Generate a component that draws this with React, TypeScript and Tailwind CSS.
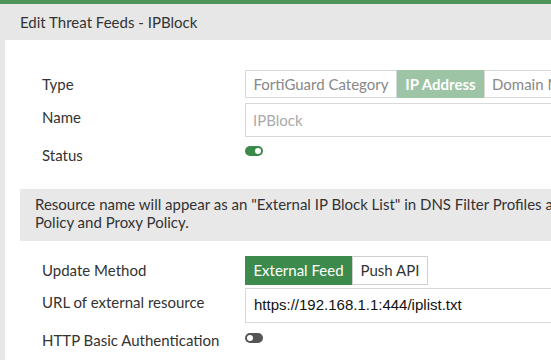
import React from 'react';

const Toggle = ({ on, className }: { on: boolean; className?: string }) => (
  <div
    className={`w-[18px] h-[10px] rounded-full flex items-center px-[2px] ${
      on ? 'bg-[#3b8a4a] justify-end' : 'bg-[#555555] justify-start'
    } ${className ?? ''}`}
  >
    <div className="w-[6px] h-[6px] rounded-full bg-white" />
  </div>
);

const Row = ({ label, children, lp }: { label: string; children: React.ReactNode; lp: string }) => (
  <div className="flex items-start">
    <div className={`w-[203px] shrink-0 text-[15px] leading-[18px] text-[#333333] ${lp}`}>{label}</div>
    <div className="flex-1 min-w-0 flex items-start">{children}</div>
  </div>
);

export default function App() {
  return (
    <div
      className="w-[551px] h-[360px] overflow-hidden bg-[#e7e7e7] flex flex-col"
      style={{ fontFamily: 'Lato, "Noto Sans", sans-serif' }}
    >
      <div className="h-[4px] bg-[#4e935a] shrink-0" />
      <div className="h-[36px] shrink-0 flex items-center pl-[20px] text-[15px] text-[#333333]">
        Edit Threat Feeds - IPBlock
      </div>
      <div className="flex-1 ml-[5px] bg-white pt-[30px] overflow-hidden">
        <div className="pl-[37px] flex flex-col w-[700px]">
          <Row label="Type" lp="pt-[5px]">
            <div className="flex h-[28px] text-[15px]">
              <div className="w-[152px] border border-[#d8d8d8] flex items-center justify-center text-[#888888]">
                FortiGuard Category
              </div>
              <div className="w-[87px] bg-[#9dc4a4] text-white font-bold flex items-center justify-center">
                IP Address
              </div>
              <div className="w-[140px] border border-[#d8d8d8] flex items-center pl-[7px] text-[#888888]">
                Domain Name
              </div>
            </div>
          </Row>
          <div className="h-[5px]" />
          <Row label="Name" lp="pt-[5px]">
            <div className="w-[400px] h-[34px] border border-[#d8d8d8] flex items-center pl-[7px] text-[15px] text-[#aaaaaa]">
              IPBlock
            </div>
          </Row>
          <Row label="Status" lp="pt-[9px]">
            <Toggle on className="mt-[9px]" />
          </Row>
        </div>
        <div className="ml-[15px] mt-[25px] h-[52px] bg-[#e8e8e8] pl-[15px] pt-[6px] text-[15px] leading-[18px] text-[#333333] whitespace-nowrap">
          <div>Resource name will appear as an "External IP Block List" in DNS Filter Profiles and</div>
          <div>Policy and Proxy Policy.</div>
        </div>
        <div className="pl-[37px] pt-[15px] flex flex-col w-[700px]">
          <Row label="Update Method" lp="pt-[5px]">
            <div className="flex h-[29px] text-[15px]">
              <div className="w-[107px] bg-[#3d8a4d] text-white flex items-center justify-center">
                External Feed
              </div>
              <div className="w-[76px] border border-[#d0d0d0] flex items-center justify-center text-[#333333]">
                Push API
              </div>
            </div>
          </Row>
          <div className="h-[3px]" />
          <Row label="URL of external resource" lp="pt-[5px]">
            <div
              className="w-[400px] h-[35px] border border-[#d8d8d8] flex items-center pl-[8px] text-[15px] text-[#111111]"
              style={{ fontFamily: '"Liberation Sans", Arial, sans-serif' }}
            >
              https://192.168.1.1:444/iplist.txt
            </div>
          </Row>
          <Row label="HTTP Basic Authentication" lp="pt-[8px]">
            <Toggle on={false} className="mt-[10px]" />
          </Row>
        </div>
      </div>
    </div>
  );
}
